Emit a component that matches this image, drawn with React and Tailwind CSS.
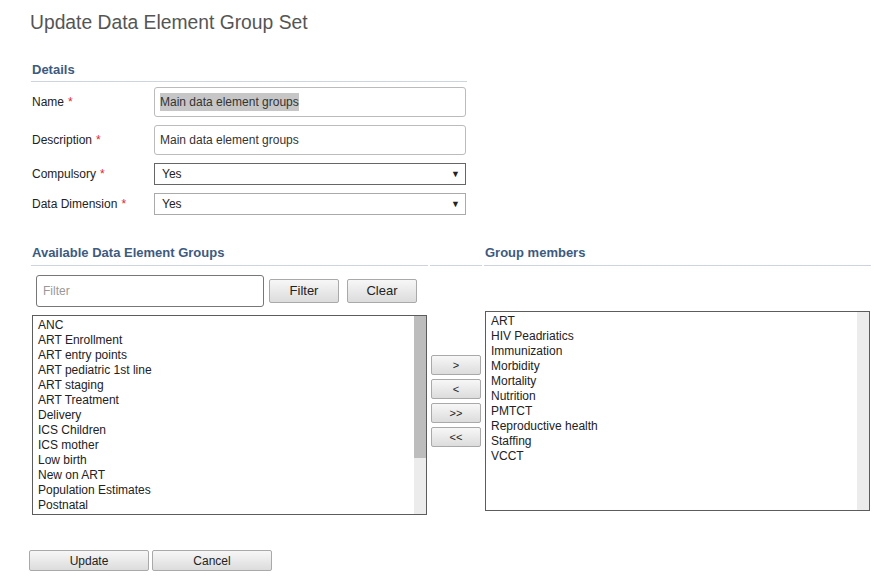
import React from 'react';

const available = [
  'ANC', 'ART Enrollment', 'ART entry points', 'ART pediatric 1st line', 'ART staging',
  'ART Treatment', 'Delivery', 'ICS Children', 'ICS mother', 'Low birth', 'New on ART',
  'Population Estimates', 'Postnatal',
];

const members = [
  'ART', 'HIV Peadriatics', 'Immunization', 'Morbidity', 'Mortality', 'Nutrition',
  'PMTCT', 'Reproductive health', 'Staffing', 'VCCT',
];

const font = { fontFamily: '"Liberation Sans", Arial, sans-serif' };

const Req = () => <span className="text-[#e4252b] ml-1">*</span>;

const Label = ({ children }) => (
  <div className="w-[122px] text-[12px] text-[#222] shrink-0">
    {children}<Req />
  </div>
);

const Btn = ({ children, className = '' }) => (
  <button className={`bg-gradient-to-b from-[#f7f7f7] to-[#dcdcdc] border border-[#a9a9a9] rounded-[2px] text-[#222] ${className}`}>
    {children}
  </button>
);

const Select = ({ value, dark }) => (
  <div className={`w-[312px] h-[22px] border ${dark ? 'border-[#666]' : 'border-[#aaa]'} flex items-center justify-between pl-[7px] pr-[5px] text-[12px] text-[#222] bg-white`}>
    <span>{value}</span>
    <span className="text-[9px] leading-none">▼</span>
  </div>
);

const ListBox = ({ items, width, thumb }) => (
  <div className={`${width} h-[200px] border border-[#5c5c5c] bg-white flex`}>
    <div className="flex-1 pt-[2px] pl-[5px] text-[12px] leading-[15px] text-[#222]">
      {items.map(i => <div key={i}>{i}</div>)}
    </div>
    <div className="w-[12px] bg-[#ececec] flex flex-col">
      {thumb && <div className="h-[142px] bg-[#bdbdbd]" />}
    </div>
  </div>
);

export default function App() {
  return (
    <div style={font} className="bg-white w-[874px] h-[588px] pl-[30px] pt-[11px]">
      <h1 className="text-[19.3px] leading-[24px] text-[#555]">Update Data Element Group Set</h1>

      <div className="w-[436px] ml-[1px] mt-[25px]">
        <div className="h-[22px] border-b border-[#cdd4df] text-[13px] font-bold text-[#3d5a80] leading-[19px] pl-[1px]">Details</div>

        <div className="flex flex-col gap-[8px] mt-[5px] pl-[1px]">
          <div className="flex items-center">
            <Label>Name</Label>
            <div className="w-[312px] h-[30px] border border-[#bbb] rounded-[3px] flex items-center pl-[5px] text-[12px] text-[#333]">
              <span className="bg-[#c6c6c6]">Main data element groups</span>
            </div>
          </div>
          <div className="flex items-center">
            <Label>Description</Label>
            <div className="w-[312px] h-[30px] border border-[#bbb] rounded-[3px] flex items-center pl-[5px] text-[12px] text-[#333]">
              Main data element groups
            </div>
          </div>
          <div className="flex items-center">
            <Label>Compulsory</Label>
            <Select value="Yes" dark />
          </div>
          <div className="flex items-center">
            <Label>Data Dimension</Label>
            <Select value="Yes" />
          </div>
        </div>
      </div>

      <div className="flex gap-[2px] ml-[1px] mt-[27px]">
        <div className="w-[397px]">
          <div className="h-[24px] border-b border-[#cdd4df] text-[13px] font-bold text-[#3d5a80] leading-[21px] pl-[1px]">Available Data Element Groups</div>
          <div className="flex items-center mt-[9px] pl-[5px]">
            <div className="w-[228px] h-[32px] border border-[#777] rounded-[3px] flex items-center pl-[6px] text-[12px] text-[#999]">Filter</div>
            <Btn className="w-[70px] h-[24px] text-[13px] ml-[5px]">Filter</Btn>
            <Btn className="w-[70px] h-[24px] text-[13px] ml-[8px]">Clear</Btn>
          </div>
          <div className="mt-[8px] pl-[1px]">
            <ListBox items={available} width="w-[395px]" thumb />
          </div>
        </div>

        <div className="w-[52px]">
          <div className="h-[24px] border-b border-[#cdd4df]" />
          <div className="flex flex-col gap-[4px] mt-[89px] pl-[1px]">
            {['>', '<', '>>', '<<'].map(b => (
              <Btn key={b} className="w-[50px] h-[20px] text-[11px] leading-none">{b}</Btn>
            ))}
          </div>
        </div>

        <div className="w-[387px]">
          <div className="h-[24px] border-b border-[#cdd4df] text-[13px] font-bold text-[#3d5a80] leading-[21px] pl-[1px]">Group members</div>
          <div className="mt-[45px] pl-[1px]">
            <ListBox items={members} width="w-[385px]" />
          </div>
        </div>
      </div>

      <div className="flex gap-[3px] mt-[35px] -ml-[1px]">
        <Btn className="w-[120px] h-[21px] text-[12px]">Update</Btn>
        <Btn className="w-[120px] h-[21px] text-[12px]">Cancel</Btn>
      </div>
    </div>
  );
}
